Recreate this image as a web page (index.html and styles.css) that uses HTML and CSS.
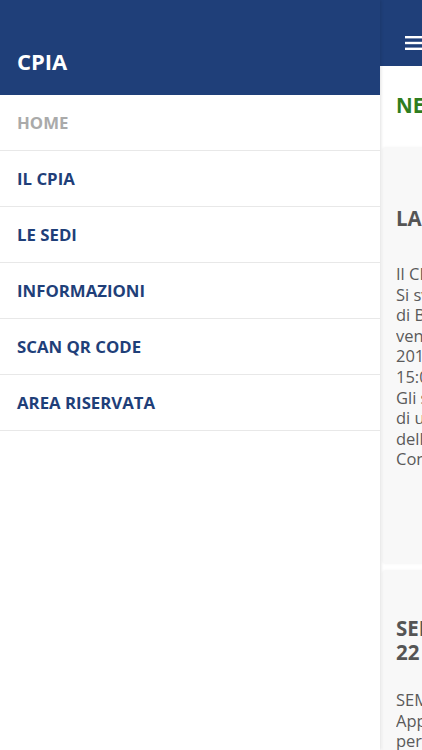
FILE: index.html
```html
<!DOCTYPE html>
<html lang="it">
<head>
<meta charset="utf-8">
<title>CPIA</title>
<link rel="stylesheet" href="styles.css">
</head>
<body>
<div class="app">
  <nav class="drawer">
    <header class="drawer-head">CPIA</header>
    <ul class="menu">
      <li class="item current">HOME</li>
      <li class="item">IL CPIA</li>
      <li class="item">LE SEDI</li>
      <li class="item">INFORMAZIONI</li>
      <li class="item">SCAN QR CODE</li>
      <li class="item">AREA RISERVATA</li>
    </ul>
  </nav>
  <main class="page">
    <header class="page-head">
      <svg class="burger" width="24" height="16" viewBox="0 0 24 16"><rect x="0" y="1" width="24" height="2.4" fill="#fff"/><rect x="0" y="6.8" width="24" height="2.4" fill="#fff"/><rect x="0" y="12.6" width="24" height="2.4" fill="#fff"/></svg>
    </header>
    <section class="content">
      <h2 class="section-title">NEWS</h2>
      <article class="card card-first">
        <h3 class="card-title">LA FESTA DEL CPIA</h3>
        <p class="card-text"><span>Il CPIA organizza una giornata di festa.</span><span>Si svolgerà presso la sede</span><span>di Brescia, in via Nicolini,</span><span>venerdì 7 giugno</span><span>2019 dalle ore</span><span>15:00 alle ore 18:00.</span><span>Gli studenti presenteranno</span><span>di un breve spettacolo</span><span>dell'anno scolastico.</span><span>Con la partecipazione di tutti.</span></p>
      </article>
      <article class="card card-second">
        <h3 class="card-title"><span>SEMINARIO DEL</span><span>22 MAGGIO</span></h3>
        <p class="card-text"><span>SEMINARIO</span><span>Apprendimento degli adulti</span><span>per la cittadinanza</span></p>
      </article>
    </section>
  </main>
</div>
</body>
</html>
```

FILE: styles.css
```css
html, body {
  margin: 0;
  padding: 0;
  background: #ffffff;
}
body {
  font-family: "Open Sans", "Noto Sans", sans-serif;
  width: 422px;
  height: 750px;
  overflow: hidden;
}
.app {
  display: flex;
  height: 750px;
  overflow: hidden;
}
.drawer {
  flex: 0 0 380px;
  width: 380px;
  background: #fff;
  position: relative;
  z-index: 2;
  box-shadow: 1px 0 3px rgba(0,0,0,0.12);
}
.drawer-head {
  height: 95px;
  background: #1f3f79;
  color: #fff;
  font-weight: 700;
  font-size: 22px;
  box-sizing: border-box;
  padding: 47px 0 0 17px;
  line-height: 28px;
}
.menu {
  list-style: none;
  margin: 0;
  padding: 0;
}
.item {
  height: 56px;
  box-sizing: border-box;
  border-bottom: 1px solid #e8e8e8;
  display: flex;
  align-items: center;
  padding: 0 0 0 17px;
  font-size: 16.8px;
  font-weight: 700;
  color: #1f3f79;
}
.item.current {
  color: #aaaaaa;
}
.page {
  flex: 1 1 auto;
  min-width: 0;
  overflow: hidden;
}
.page-head {
  height: 66px;
  background: #1f3f79;
  box-sizing: border-box;
  padding: 35px 0 0 25px;
  width: 400px;
}
.burger {
  display: block;
}
.content {
  width: 400px;
  padding: 0 0 0 3px;
}
.section-title {
  margin: 0;
  height: 82px;
  box-sizing: border-box;
  padding: 26px 0 0 13px;
  font-size: 20.5px;
  line-height: 26px;
  font-weight: 700;
  color: #2f7d1f;
}
.card {
  background: #f8f8f8;
  box-shadow: 0 0 3px rgba(0,0,0,0.08);
  padding: 0 13px;
  box-sizing: border-box;
  margin-bottom: 8px;
  overflow: hidden;
}
.card-first {
  height: 415px;
  padding-top: 58px;
}
.card-second {
  height: 300px;
  padding-top: 45px;
}
.card-title {
  margin: 0;
  font-size: 20.5px;
  line-height: 24px;
  font-weight: 700;
  color: #555555;
}
.card-title span {
  display: block;
  white-space: nowrap;
  overflow: hidden;
}
.card-first .card-title {
  margin-bottom: 34px;
}
.card-second .card-title {
  margin-bottom: 26px;
}
.card-text {
  margin: 0;
  font-size: 16.5px;
  line-height: 20.6px;
  color: #5a5a5a;
}
.card-text span {
  display: block;
  white-space: nowrap;
  overflow: hidden;
}
```
